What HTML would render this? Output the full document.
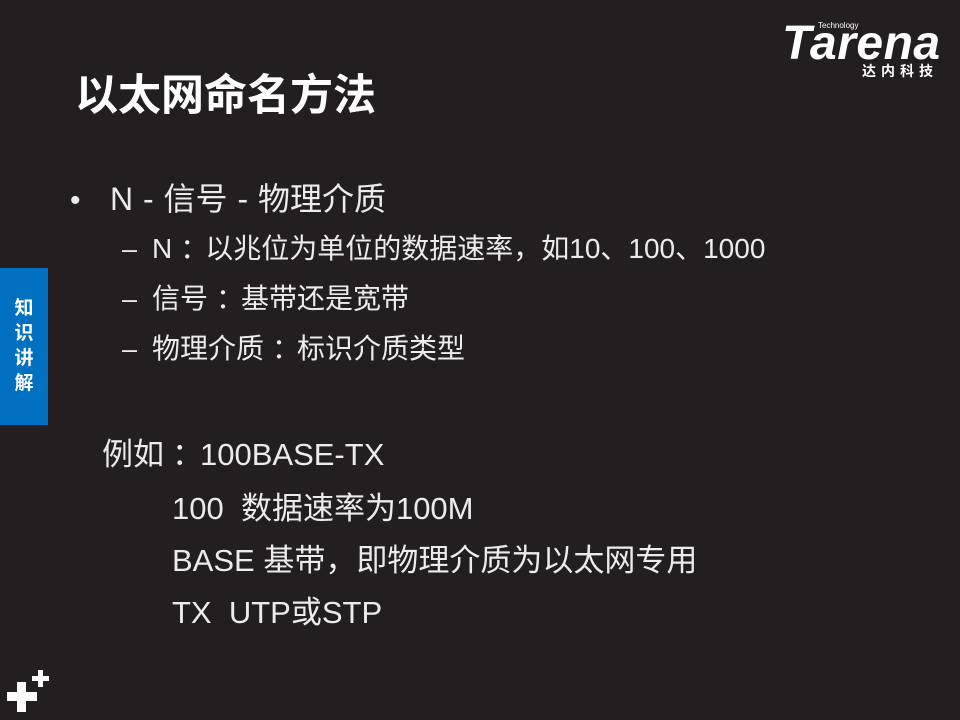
<!DOCTYPE html>
<html><head><meta charset="utf-8"><style>
body{margin:0;width:960px;height:720px;background:#231f20;overflow:hidden;position:relative;font-family:"Liberation Sans","Noto Sans CJK SC",sans-serif;color:#ececec}
.t{position:absolute;white-space:nowrap;line-height:1}
.c{display:inline-block;padding-left:8px;margin-right:-3px}
</style></head><body>
<div class="t" style="left:75px;top:75px;font-size:43px;font-weight:bold;color:#fff">以太网命名方法</div>
<div class="t" style="left:70px;top:186px;font-size:30px">•</div>
<div class="t" style="left:110px;top:183px;font-size:32px;word-spacing:1px">N - 信号 - 物理介质</div>
<div class="t" style="left:122px;top:236px;font-size:27px">–</div>
<div class="t" style="left:152px;top:235px;font-size:28px">N<span class="c">：</span>以兆位为单位的数据速率，如10、100、1000</div>
<div class="t" style="left:122px;top:286px;font-size:27px">–</div>
<div class="t" style="left:152px;top:285px;font-size:28px">信号<span class="c">：</span>基带还是宽带</div>
<div class="t" style="left:122px;top:336px;font-size:27px">–</div>
<div class="t" style="left:152px;top:335px;font-size:28px">物理介质<span class="c">：</span>标识介质类型</div>
<div class="t" style="left:102px;top:439px;font-size:31px">例如<span class="c">：</span>100BASE-TX</div>
<div class="t" style="left:172px;top:493px;font-size:31px">100&nbsp; 数据速率为100M</div>
<div class="t" style="left:172px;top:545px;font-size:31px">BASE 基带，即物理介质为以太网专用</div>
<div class="t" style="left:172px;top:597px;font-size:31px">TX&nbsp; UTP或STP</div>
<div style="position:absolute;left:0;top:268px;width:48px;height:157px;background:#0070c0"></div>
<div class="t" style="left:12px;top:296px;font-size:19px;font-weight:bold;color:#fff;line-height:25px;width:24px;white-space:normal;text-align:center">知识讲解</div>
<div class="t" style="left:782px;top:20px;font-size:48px;font-weight:bold;font-style:italic;color:#fff;letter-spacing:0.5px">Tarena</div>
<div class="t" style="left:818px;top:22px;font-size:8px;color:#fff">Technology</div>
<div class="t" style="left:862px;top:64px;font-size:14px;font-weight:bold;color:#fff;letter-spacing:5px">达内科技</div>
<svg style="position:absolute;left:0;top:660px" width="60" height="60"><g fill="#fff"><rect x="7" y="32" width="30" height="9"/><rect x="17" y="22" width="9" height="30"/><rect x="32" y="16" width="17" height="5"/><rect x="38" y="10" width="5" height="17"/></g></svg>
</body></html>
